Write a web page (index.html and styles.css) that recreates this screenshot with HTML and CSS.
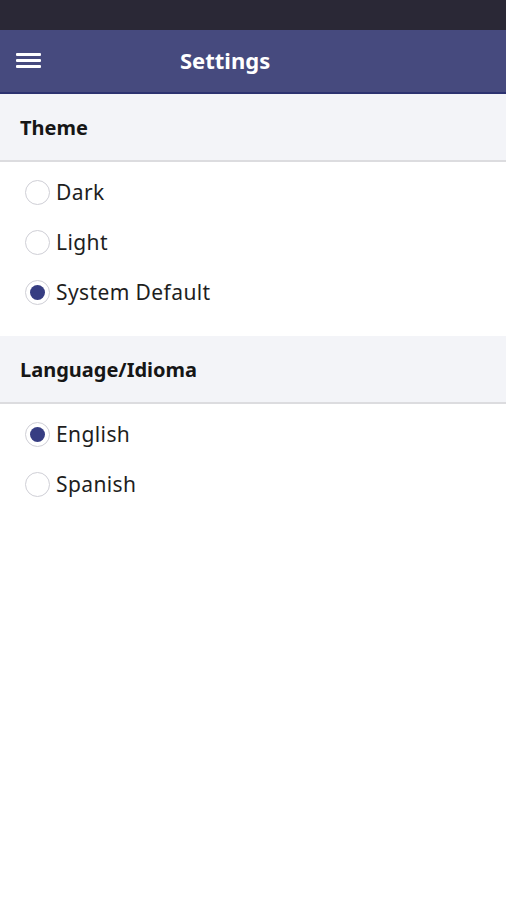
FILE: index.html
```html
<!DOCTYPE html>
<html>
<head>
<meta charset="utf-8">
<link rel="stylesheet" href="styles.css">
</head>
<body>
<div class="status"></div>
<header class="appbar">
  <button class="menu" aria-label="Menu">
    <svg width="26" height="20" viewBox="0 0 26 20"><g fill="#fff"><rect x="0" y="3" width="25" height="3" rx="1"/><rect x="0" y="9" width="25" height="3" rx="1"/><rect x="0" y="15" width="25" height="3" rx="1"/></g></svg>
  </button>
  <h1 class="title">Settings</h1>
</header>
<section>
  <div class="sec-head">Theme</div>
  <ul class="options">
    <li class="opt"><span class="radio"></span>Dark</li>
    <li class="opt"><span class="radio"></span>Light</li>
    <li class="opt"><span class="radio on"></span>System Default</li>
  </ul>
</section>
<section>
  <div class="sec-head">Language/Idioma</div>
  <ul class="options">
    <li class="opt"><span class="radio on"></span>English</li>
    <li class="opt"><span class="radio"></span>Spanish</li>
  </ul>
</section>
</body>
</html>
```
FILE: styles.css
```css
* { box-sizing: border-box; }
html, body { margin: 0; padding: 0; background: #fff; }
body { font-family: "Noto Sans", Lato, sans-serif; color: #1c1c1c; width: 506px; }
.status { height: 30px; background: #2a2836; }
.appbar {
  height: 64px;
  background: #464a7e;
  border-bottom: 2px solid #2c3270;
  display: flex;
  align-items: center;
  padding-left: 16px;
  padding-bottom: 3px;
}
.menu { background: none; border: 0; padding: 0; width: 26px; height: 20px; display: flex; }
.title {
  margin: 0 0 0 138px;
  color: #fff;
  font-size: 22px;
  font-weight: 700;
}
.sec-head {
  height: 68px;
  background: #f3f4f8;
  border-bottom: 2px solid #dcdcdf;
  display: flex;
  align-items: center;
  padding-left: 20px;
  font-size: 20px;
  font-weight: 700;
  color: #161616;
}
.options { list-style: none; margin: 0; padding: 5px 0 19px; }
.opt {
  height: 50px;
  display: flex;
  align-items: center;
  padding-left: 25px;
  font-size: 21px;
  letter-spacing: 0.4px;
  color: #1e1e1e;
}
.radio {
  width: 25px; height: 25px;
  border-radius: 50%;
  border: 1px solid #cfcfd6;
  margin-right: 6px;
  display: flex; align-items: center; justify-content: center;
  flex: none;
}
.radio.on::after {
  content: "";
  width: 15px; height: 15px;
  border-radius: 50%;
  background: #363d82;
}
```
